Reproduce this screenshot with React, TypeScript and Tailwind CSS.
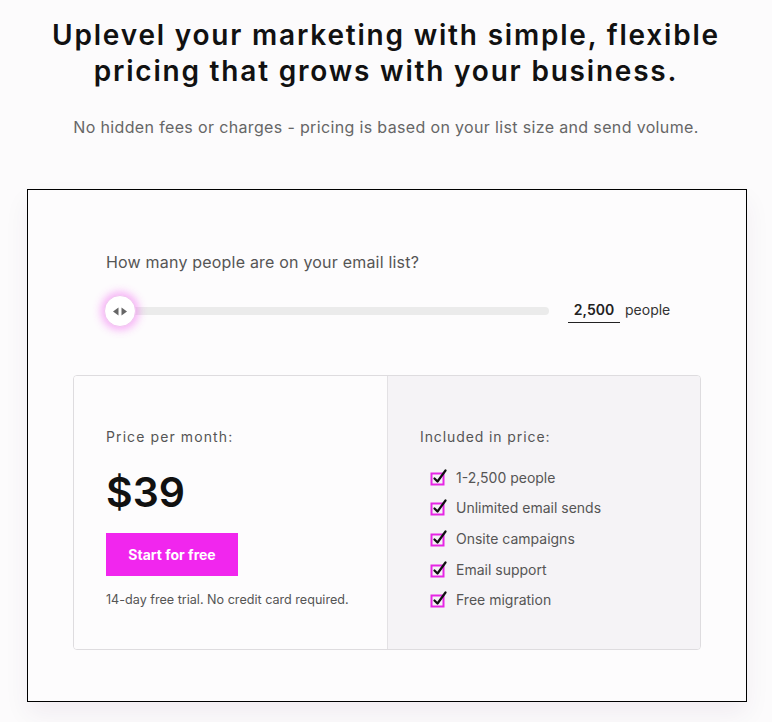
import React from "react";

function CheckIcon() {
  return (
    <svg width="18" height="17" viewBox="0 0 18 17" className="shrink-0">
      <rect x="1.5" y="4.5" width="12" height="11" fill="none" stroke="#e626e4" strokeWidth="2" />
      <path d="M4.5 9.5 L7.5 12.5 L15.5 1.5" fill="none" stroke="#111" strokeWidth="2.2" strokeLinecap="round" strokeLinejoin="round" />
    </svg>
  );
}

const items = ["1-2,500 people", "Unlimited email sends", "Onsite campaigns", "Email support", "Free migration"];

export default function App() {
  return (
    <div className="w-[772px] h-[722px] bg-[#fcfbfc] overflow-hidden" style={{ fontFamily: "Inter, 'Noto Sans', sans-serif" }}>
      <div className="pt-[17px] flex flex-col items-center">
        <h1 className="text-[28px] leading-[36px] font-semibold text-[#111] text-center tracking-[1.8px] whitespace-nowrap">
          Uplevel your marketing with simple, flexible
          <br />
          pricing that grows with your business.
        </h1>
        <p className="mt-[27px] text-[16px] leading-[22px] text-[#666] text-center tracking-[0.35px] whitespace-nowrap">
          No hidden fees or charges - pricing is based on your list size and send volume.
        </p>
      </div>
      <div className="ml-[27px] mt-[51px] w-[720px] h-[513px] border border-black bg-[#fdfcfd] shadow-[0_12px_24px_rgba(60,20,80,0.06)] px-[45px] pt-[61px]">
        <div className="pl-[33px] text-[16px] leading-[22px] text-[#555] tracking-[0.2px]">How many people are on your email list?</div>
        <div className="mt-[22px] flex items-center pl-[32px] h-[32px]">
          <div className="relative w-[444px] h-[8px] rounded-full bg-[#ebebeb]">
            <div className="absolute left-[-1px] top-[-12px] w-[32px] h-[32px] rounded-full bg-white border border-[#f1c6f0] shadow-[0_0_8px_3px_rgba(240,80,240,0.45)] flex items-center justify-center">
              <svg width="16" height="9" viewBox="0 0 16 9">
                <path d="M1 4.5 L6.5 0.5 L6.5 8.5 Z" fill="#666" />
                <path d="M15 4.5 L9.5 0.5 L9.5 8.5 Z" fill="#666" />
              </svg>
            </div>
          </div>
          <div className="ml-[19px] w-[52px] border-b border-[#222] text-center text-[14px] leading-[24px] font-semibold text-[#222] mt-[-1px]">2,500</div>
          <div className="ml-[5px] text-[14px] text-[#333] mt-[-4px]">people</div>
        </div>
        <div className="mt-[48px] flex h-[275px] border border-[#dedcdf] rounded-[4px] overflow-hidden">
          <div className="w-[314px] bg-[#fdfcfd] border-r border-[#e3e1e4] pl-[32px] pt-[51px]">
            <div className="text-[14px] leading-[20px] text-[#555] tracking-[1.1px]">Price per month:</div>
            <div className="mt-[20px] text-[41px] leading-[50px] font-semibold text-[#111]">$39</div>
            <button className="mt-[16px] w-[132px] h-[43px] bg-[#f126ee] text-white text-[14px] font-bold">Start for free</button>
            <div className="mt-[15px] text-[12.6px] leading-[18px] text-[#555]">14-day free trial. No credit card required.</div>
          </div>
          <div className="flex-1 bg-[#f5f3f6] pl-[32px] pt-[51px]">
            <div className="text-[14px] leading-[20px] text-[#555] tracking-[0.9px]">Included in price:</div>
            <div className="mt-[20px] pl-[10px] flex flex-col gap-[10.7px]">
              {items.map((t) => (
                <div key={t} className="flex items-center gap-[8px] h-[20px]">
                  <CheckIcon />
                  <span className="text-[14px] text-[#555]">{t}</span>
                </div>
              ))}
            </div>
          </div>
        </div>
      </div>
    </div>
  );
}
